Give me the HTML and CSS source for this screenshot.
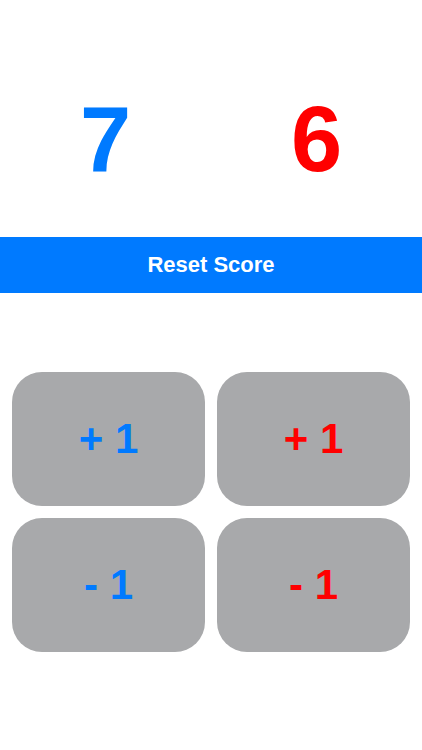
FILE: index.html
```html
<!DOCTYPE html>
<html lang="en">
<head>
    <meta charset="UTF-8" />
    <meta name="viewport" content="width=device-width, initial-scale=1.0"/>
    <title>Score Keeper</title>
    <link rel="stylesheet" href="styles.css">
</head>
<body>
<div class="scores">
    <div class="score blue" id="score-a">7</div>
    <div class="score red" id="score-b">6</div>
</div>

<button class="reset" id="reset-btn">Reset Score</button>

<div class="pad">
    <button class="tap blue" data-team="a" data-step="1">+ 1</button>
    <button class="tap red" data-team="b" data-step="1">+ 1</button>
    <button class="tap blue" data-team="a" data-step="-1">- 1</button>
    <button class="tap red" data-team="b" data-step="-1">- 1</button>
</div>

<script>
    const scores = { a: 7, b: 6 };
    const scoreA = document.getElementById("score-a");
    const scoreB = document.getElementById("score-b");

    function render() {
        scoreA.textContent = scores.a;
        scoreB.textContent = scores.b;
    }

    document.querySelectorAll(".tap").forEach((btn) => {
        btn.addEventListener("click", () => {
            scores[btn.dataset.team] += Number(btn.dataset.step);
            render();
        });
    });

    document.getElementById("reset-btn").addEventListener("click", () => {
        scores.a = 0;
        scores.b = 0;
        render();
    });
</script>
</body>
</html>
```

FILE: styles.css
```css
body {
    margin: 0;
    background: #fff;
    font-family: "Liberation Sans", Arial, sans-serif;
}
.blue {
    color: #007aff;
}
.red {
    color: #ff0000;
}
.scores {
    display: grid;
    grid-template-columns: 1fr 1fr;
    padding-top: 93px;
}
.score {
    text-align: center;
    font-size: 92px;
    font-weight: bold;
    line-height: 1;
}
.reset {
    display: block;
    width: 100%;
    height: 56px;
    margin-top: 52px;
    border: none;
    background: #007aff;
    color: #fff;
    font-family: inherit;
    font-size: 22px;
    font-weight: bold;
    cursor: pointer;
}
.pad {
    display: grid;
    grid-template-columns: 1fr 1fr;
    grid-auto-rows: 134px;
    gap: 12px;
    padding: 0 12px;
    margin-top: 79px;
}
.tap {
    display: flex;
    align-items: center;
    justify-content: center;
    border: none;
    border-radius: 30px;
    background: #a8a9ab;
    font-family: inherit;
    font-size: 42px;
    font-weight: bold;
    cursor: pointer;
}
```
